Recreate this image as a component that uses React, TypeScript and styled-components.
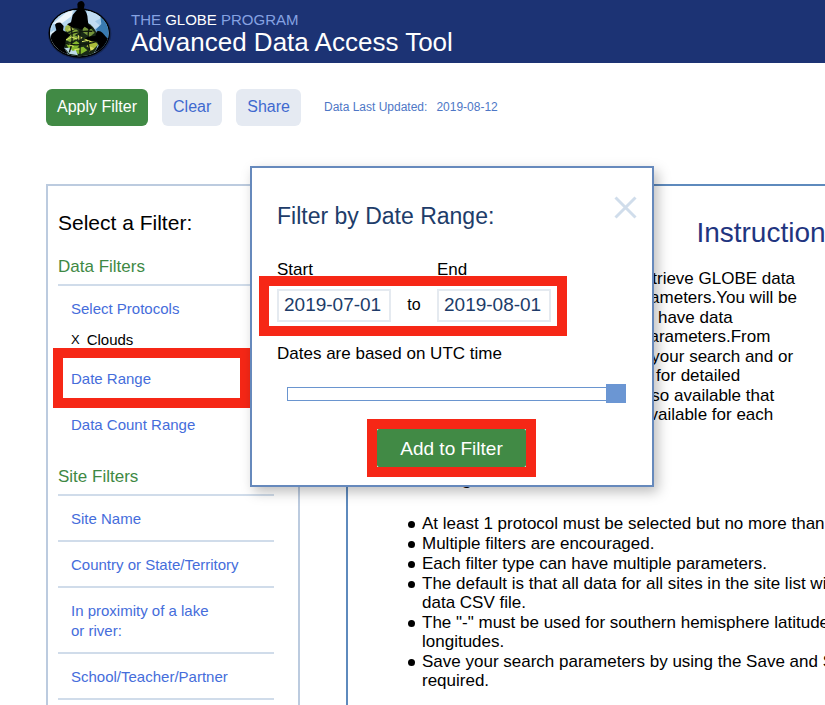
import React, { useState } from 'react';
import styled, { createGlobalStyle } from 'styled-components';

const GlobalStyle = createGlobalStyle`
  *, *::before, *::after { box-sizing: border-box; }
  body {
    margin: 0;
    background: #fff;
    color: #000;
    font-family: "Liberation Sans", Helvetica, Arial, sans-serif;
    font-size: 17px;
    line-height: 20px;
    overflow-x: hidden;
  }
  button, input { font-family: inherit; }
`;

const RED = '#f62716';
const GREEN = '#418a45';

const Page = styled.div`
  min-height: 100vh;
  display: flex;
  flex-direction: column;
  overflow: hidden;
`;

const Header = styled.header`
  display: flex;
  align-items: center;
  gap: 19px;
  height: 63px;
  padding: 0 0 4px 48px;
  background: #1c3374;
`;

const LogoSvg = styled.svg`
  width: 64px;
  height: 58px;
  flex: none;
`;

const Brand = styled.div`
  display: flex;
  flex-direction: column;
  padding-top: 6px;
`;

const Program = styled.p`
  margin: 0;
  font-size: 15px;
  line-height: 18px;
  color: #86a2e2;

  span { color: #fff; }
`;

const AppTitle = styled.h1`
  margin: 0;
  font-size: 26px;
  font-weight: 400;
  line-height: 26px;
  color: #fff;
`;

const Toolbar = styled.div`
  display: flex;
  align-items: center;
  gap: 14px;
  padding: 26px 46px 0;
`;

const ToolButton = styled.button<{ $primary?: boolean }>`
  height: 37px;
  padding: 0 11px 2px;
  border: 0;
  border-radius: 6px;
  font-size: 16px;
  background: ${(p) => (p.$primary ? GREEN : '#e5eaf2')};
  color: ${(p) => (p.$primary ? '#fff' : '#3f69cf')};
`;

const Updated = styled.p`
  display: flex;
  gap: 9px;
  margin: 0 0 2px 9px;
  font-size: 12px;
  color: #4e77c6;
`;

const Workspace = styled.main`
  position: relative;
  flex: 1;
  display: flex;
  gap: 46px;
  margin-top: 58px;
  padding-left: 46px;
`;

const FilterPanel = styled.aside`
  flex: 0 0 254px;
  padding: 23px 24px 0 10px;
  border: 2px solid #bccbdf;
  border-bottom: 0;
`;

const PanelTitle = styled.h2`
  margin: 0 0 18px;
  font-size: 21px;
  font-weight: 400;
  line-height: 28px;
`;

const FilterGroup = styled.section`
  & + & { margin-top: 19px; }
`;

const GroupTitle = styled.h3`
  margin: 0;
  padding-bottom: 5px;
  border-bottom: 2px solid #d0dcea;
  font-size: 17px;
  font-weight: 400;
  line-height: 24px;
  color: #3e8944;
`;

const FilterList = styled.ul`
  margin: 0;
  padding: 0;
  list-style: none;
  font-size: 15px;
`;

const FilterItem = styled.li<{ $divider?: boolean; $open?: boolean; $marked?: boolean }>`
  position: relative;
  padding: ${(p) => (p.$open ? '13px 13px 4px' : '13px 50px 11px 13px')};
  border-bottom: ${(p) => (p.$divider ? '2px solid #d0dcea' : '0')};

  ${(p) =>
    p.$marked &&
    `&::after {
      content: '';
      position: absolute;
      inset: -8px 24px -8px -5px;
      border: 10px solid ${RED};
      pointer-events: none;
    }`}
`;

const FilterLink = styled.a<{ $wide?: boolean }>`
  display: block;
  margin-right: ${(p) => (p.$wide ? '-50px' : '0')};
  color: #456ddb;
  text-decoration: none;
`;

const Selected = styled.div`
  display: flex;
  gap: 7px;
  margin-top: 11px;
`;

const RemoveButton = styled.button`
  padding: 0;
  border: 0;
  background: none;
  color: #000;
  font-size: 13px;
  line-height: 20px;
`;

const InfoPanel = styled.section`
  flex: 1 0 844px;
  padding: 31px 34px 0;
  border: 2px solid #5e8abd;
  border-bottom: 0;
`;

const InfoTitle = styled.h2`
  margin: 0 0 20px;
  font-size: 28px;
  font-weight: 400;
  line-height: 32px;
  text-align: center;
  color: #1f3580;
`;

const Intro = styled.p`
  margin: 0;
  line-height: 19px;
`;

const IntroLine = styled.span`
  display: block;

  &:nth-child(even) { padding-bottom: 1px; }
`;

const TipsTitle = styled.h3`
  margin: 21px 0 25px;
  font-size: 20px;
  font-weight: 400;
  line-height: 24px;
`;

const Tips = styled.ul`
  display: grid;
  gap: 1px;
  margin: 0;
  padding-left: 40px;
  line-height: 19px;
  list-style: none;
`;

const Tip = styled.li`
  position: relative;

  &::before {
    content: '';
    position: absolute;
    top: 7px;
    left: -14px;
    width: 7px;
    height: 7px;
    border-radius: 50%;
    background: #000;
  }
`;

const Modal = styled.div`
  position: absolute;
  top: -18px;
  left: 250px;
  width: 404px;
  padding: 34px 26px 8px 25px;
  border: 2px solid #6689bc;
  background: #fff;
  box-shadow: 4px 5px 12px rgba(0, 0, 0, 0.26);
`;

const ModalTitle = styled.h2`
  margin: 0 0 31px;
  font-size: 23px;
  font-weight: 400;
  line-height: 28px;
  color: #203c69;
`;

const CloseButton = styled.button`
  position: absolute;
  top: 28px;
  right: 15px;
  width: 23px;
  height: 23px;
  padding: 0;
  border: 0;
  background: none;

  svg { display: block; }
`;

const Labels = styled.div`
  display: grid;
  grid-template-columns: 160px 1fr;
  height: 15px;
  line-height: 18px;
`;

const Highlight = styled.div`
  position: relative;
  width: fit-content;
  border: 10px solid ${RED};
`;

const DateHighlight = styled(Highlight)`
  display: flex;
  margin-left: -18px;
  padding: 3px 6px 4px 8px;
`;

const DateInput = styled.input`
  width: 114px;
  height: 33px;
  padding: 0 5px 2px;
  border: 2px solid #e5eaf0;
  background: #fff;
  color: #203c69;
  font-size: 19px;
`;

const Between = styled.span`
  width: 46px;
  text-align: center;
  font-size: 16px;
  line-height: 32px;
`;

const Note = styled.p`
  margin: 8px 0 20px;
`;

const Slider = styled.input`
  appearance: none;
  display: block;
  width: 339px;
  height: 19px;
  margin: 0 0 16px 10px;
  background: none;

  &::-webkit-slider-runnable-track {
    height: 14px;
    border: 1px solid #6a95cf;
    border-right: 0;
  }
  &::-webkit-slider-thumb {
    appearance: none;
    width: 20px;
    height: 19px;
    margin-top: -4px;
    background: #6b96d3;
  }
`;

const ButtonHighlight = styled(Highlight)`
  margin: 0 auto;
`;

const AddButton = styled.button`
  display: block;
  width: 149px;
  height: 38px;
  padding: 2px 0 0;
  border: 0;
  border-radius: 2px;
  background: ${GREEN};
  color: #fff;
  font-size: 19px;
`;

function Logo() {
  return (
    <LogoSvg viewBox="24 3 192 174" role="img" aria-label="GLOBE">
      <defs>
        <clipPath id="oval"><ellipse cx="118" cy="99" rx="88" ry="70" /></clipPath>
      </defs>
      <ellipse cx="119" cy="101" rx="95" ry="76" fill="#152653" />
      <ellipse cx="118" cy="99" rx="92" ry="74" fill="#000" />
      <g clipPath="url(#oval)">
        <rect x="24" y="20" width="190" height="160" fill="#9fc9e8" />
        <path d="M24 20H105L96 65L70 80L42 68L28 110Z" fill="#b9d9f0" />
        <path d="M38 72L78 38L99 30L95 48L66 70Z" fill="#eef6fb" />
        <path d="M140 25Q175 32 184 54L165 64L181 78L161 88L142 64Z" fill="#c1ddf2" />
        <path d="M181 48L215 76L212 133L181 146L190 102L166 90L184 72Z" fill="#397bb1" />
        <path d="M29 99L43 90L55 154L40 139Z" fill="#d8eaf5" />
        <ellipse cx="122" cy="122" rx="52" ry="58" fill="#192916" />
        <path d="M77 78L99 69L91 83L107 87L82 96L74 91Z" fill="#a2b94b" />
        <path d="M85 101L108 88L119 96L104 106L120 113L90 126L76 119Z" fill="#81a439" />
        <path d="M129 76L151 83L164 98L149 111L128 96Z" fill="#75943a" />
        <path d="M76 128L96 131L109 123L121 132L112 144L130 140L142 151L122 163L93 157Z" fill="#84b72d" />
        <path d="M131 116L163 119L174 134L158 151L139 139L149 130Z" fill="#a9bc3a" />
        <path d="M74 144L89 143L98 153L107 150L114 166L88 161Z" fill="#bddbe8" />
        <path d="M83 88L99 80L95 91ZM113 104L128 113L116 121ZM149 139L163 145L147 157Z" fill="#d9dd60" />
        <path d="M72 112Q102 91 157 94M69 128Q110 143 173 123M88 157Q102 122 93 82M120 165V76M151 158Q139 119 148 80" fill="none" stroke="#111a0e" strokeWidth="4" />
        <path d="M78 120L95 111L111 117M126 125L148 120L155 127M103 149L119 147M88 135L101 139" fill="none" stroke="#dce867" strokeWidth="3" />
        <path d="M30 116L35 102L49 91L45 74Q50 66 62 68L71 78L69 91L82 99L91 106L78 118L73 145L83 161L66 164L47 146Z" fill="#000" />
        <path d="M213 124L199 112L188 99Q180 90 170 94L166 108L151 109L134 115L154 124L171 124L176 137L164 157L190 149Z" fill="#000" />
      </g>
      <path d="M113 27L112 12Q114 4 123 3Q132 4 134 14L131 28Q142 36 143 57L145 73L157 84L148 89L134 80L126 89L108 83L97 83L81 73L93 67L98 45Z" fill="#000" />
    </LogoSvg>
  );
}

const siteFilters = ['Site Name', 'Country or State/Territory', 'In proximity of a lake or river:', 'School/Teacher/Partner'];

const introLines = [
  'With this tool you can search and retrieve GLOBE data',
  'through several different search parameters.You will be',
  'able to locate schools with sites that have data',
  'available for your selected search parameters.From',
  'there you can also choose to refine your search and or',
  'download data. See the User Guide for detailed',
  'instructions. A complete tutorial is also available that',
  'describes the range of data made available for each',
  'protocol.',
];

export default function App() {
  const [start, setStart] = useState('2019-07-01');
  const [end, setEnd] = useState('2019-08-01');
  const [position, setPosition] = useState(100);

  return (
    <>
      <GlobalStyle />
      <Page>
        <Header>
          <Logo />
          <Brand>
            <Program>THE <span>GLOBE</span> PROGRAM</Program>
            <AppTitle>Advanced Data Access Tool</AppTitle>
          </Brand>
        </Header>
        <Toolbar>
          <ToolButton $primary type="button">Apply Filter</ToolButton>
          <ToolButton type="button">Clear</ToolButton>
          <ToolButton type="button">Share</ToolButton>
          <Updated><span>Data Last Updated:</span><time>2019-08-12</time></Updated>
        </Toolbar>
        <Workspace>
          <FilterPanel>
            <PanelTitle>Select a Filter:</PanelTitle>
            <FilterGroup>
              <GroupTitle>Data Filters</GroupTitle>
              <FilterList>
                <FilterItem $open $divider>
                  <FilterLink href="#protocols">Select Protocols</FilterLink>
                  <Selected>
                    <RemoveButton type="button" aria-label="Remove Clouds">X</RemoveButton>
                    <span>Clouds</span>
                  </Selected>
                </FilterItem>
                <FilterItem $divider $marked>
                  <FilterLink href="#date-range">Date Range</FilterLink>
                </FilterItem>
                <FilterItem>
                  <FilterLink href="#data-count">Data Count Range</FilterLink>
                </FilterItem>
              </FilterList>
            </FilterGroup>
            <FilterGroup>
              <GroupTitle>Site Filters</GroupTitle>
              <FilterList>
                {siteFilters.map((name) => (
                  <FilterItem key={name} $divider>
                    <FilterLink href="#site" $wide={name.includes('/')}>{name}</FilterLink>
                  </FilterItem>
                ))}
              </FilterList>
            </FilterGroup>
          </FilterPanel>
          <InfoPanel>
            <InfoTitle>Instructions</InfoTitle>
            <Intro>
              {introLines.map((line) => (
                <IntroLine key={line}>{line}</IntroLine>
              ))}
            </Intro>
            <TipsTitle>Searching Hints</TipsTitle>
            <Tips>
              <Tip>At least 1 protocol must be selected but no more than 6.</Tip>
              <Tip>Multiple filters are encouraged.</Tip>
              <Tip>Each filter type can have multiple parameters.</Tip>
              <Tip>The default is that all data for all sites in the site list will be in the<br />data CSV file.</Tip>
              <Tip>The "-" must be used for southern hemisphere latitudes and western<br />longitudes.</Tip>
              <Tip>Save your search parameters by using the Save and Share buttons if<br />required.</Tip>
            </Tips>
          </InfoPanel>
          <Modal role="dialog" aria-labelledby="modal-title">
            <CloseButton type="button" aria-label="Close">
              <svg width="23" height="23" viewBox="0 0 23 23">
                <path d="M1.5 1.5L21.5 21.5M21.5 1.5L1.5 21.5" stroke="#d0ddeb" strokeWidth="3" />
              </svg>
            </CloseButton>
            <ModalTitle id="modal-title">Filter by Date Range:</ModalTitle>
            <Labels>
              <label htmlFor="start">Start</label>
              <label htmlFor="end">End</label>
            </Labels>
            <DateHighlight>
              <DateInput id="start" type="text" value={start} onChange={(e) => setStart(e.target.value)} />
              <Between>to</Between>
              <DateInput id="end" type="text" value={end} onChange={(e) => setEnd(e.target.value)} />
            </DateHighlight>
            <Note>Dates are based on UTC time</Note>
            <Slider
              type="range"
              min="0"
              max="100"
              aria-label="Date range"
              value={position}
              onChange={(e) => setPosition(Number(e.target.value))}
            />
            <ButtonHighlight>
              <AddButton type="button">Add to Filter</AddButton>
            </ButtonHighlight>
          </Modal>
        </Workspace>
      </Page>
    </>
  );
}
